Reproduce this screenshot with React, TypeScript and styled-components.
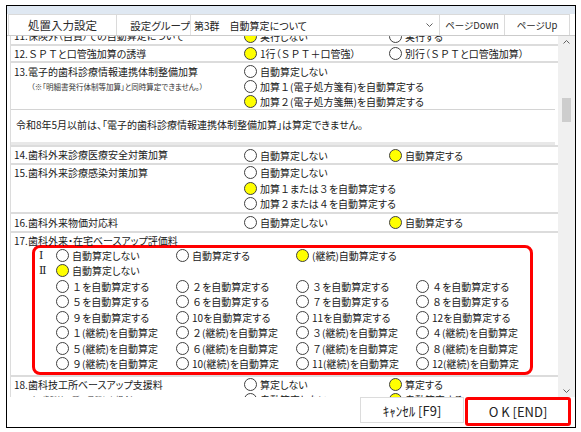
import React from 'react';
import styled, { createGlobalStyle, css } from 'styled-components';

type Opt = { text: string; on?: boolean };

type Entry = {
  title: string;
  sub?: string;
  opts: Opt[];
  stack?: boolean;
  line: number;
  padTop?: number;
  info?: string;
};

const GlobalStyle = createGlobalStyle`
  html, body {
    margin: 0;
    padding: 0;
    background: #ffffff;
  }
  body {
    font-family: "Noto Sans CJK JP", "Noto Sans", sans-serif;
    font-size: 10px;
    color: #202020;
    font-feature-settings: "palt";
  }
`;

const Window = styled.div`
  margin: 5px 0 0 6px;
  width: 568px;
  height: 421px;
  border: 1px solid #000;
  background: #fff;
  display: flex;
  flex-direction: column;
  overflow: hidden;
`;

const Caption = styled.div`
  height: 8px;
  background: #dfe8f2;
`;

const Toolbar = styled.div`
  display: flex;
  height: 21px;
  padding-left: 1px;
  border-bottom: 1px solid #cbcbcb;
`;

const ToolButton = styled.div<{ $w: number; $size?: number }>`
  width: ${p => p.$w}px;
  box-sizing: border-box;
  border: 1px solid #dadada;
  border-bottom: none;
  border-left: none;
  display: flex;
  align-items: center;
  justify-content: center;
  font-size: ${p => p.$size ?? 9.5}px;
  color: #2a2a2a;
  white-space: nowrap;
  &:first-child {
    border-left: 1px solid #dadada;
  }
`;

const Group = styled.div`
  width: 322px;
  display: flex;
  border-top: 1px solid #dadada;
  border-right: 1px solid #dadada;
`;

const GroupLabel = styled.div`
  width: 73px;
  display: flex;
  align-items: center;
  justify-content: flex-end;
  font-size: 10.5px;
  color: #2a2a2a;
  white-space: nowrap;
`;

const Select = styled.div`
  flex: 1;
  display: flex;
  align-items: center;
  justify-content: space-between;
  padding: 0 6px 0 3px;
  border-left: 1px solid #e2e2e2;
  font-size: 10px;
`;

const Body = styled.div`
  flex: 1;
  display: flex;
  min-height: 0;
`;

const Viewport = styled.div`
  flex: 1;
  overflow: hidden;
  padding-left: 3px;
`;

/* list is scrolled a little, so item 11 is cut at the top */
const List = styled.div`
  margin-top: -8px;
`;

const Row = styled.div<{ $padTop?: number }>`
  background: #fff;
  border-left: 1px solid #dcdcdc;
  border-bottom: 2px solid #dcdcdc;
  padding-top: ${p => p.$padTop ?? 0}px;
`;

const RowMain = styled.div`
  display: grid;
  grid-template-columns: 233px 1fr;
`;

const Label = styled.div<{ $line: number }>`
  padding-left: 3px;
  line-height: ${p => p.$line}px;
  white-space: nowrap;
  & > span {
    display: block;
  }
`;

const Sub = styled.span`
  padding-left: 17px;
  font-size: 7.5px;
  color: #333;
`;

const Options = styled.div<{ $stack?: boolean; $line: number }>`
  display: grid;
  grid-template-columns: ${p => (p.$stack ? '1fr' : '145px 1fr')};
  grid-auto-rows: ${p => p.$line}px;
`;

const Choice = styled.div`
  display: flex;
  align-items: center;
  gap: 3px;
  white-space: nowrap;
`;

const Dot = styled.span<{ $on?: boolean }>`
  flex: none;
  width: 13px;
  height: 13px;
  box-sizing: border-box;
  border-radius: 50%;
  border: 1px solid #404040;
  background: ${p => (p.$on ? '#ffff00' : '#fff')};
`;

/* full-width latin and digits keep their em width */
const Wide = styled.span`
  font-feature-settings: normal;
`;

const Info = styled.div`
  margin-right: 3px;
  border-top: 1px solid #d4d4d4;
  border-bottom: 3px solid #e8e8e8;
  padding: 7px 0 9px 5px;
  line-height: 16px;
`;

const Title = styled.div`
  padding: 2px 0 0 3px;
  line-height: 12px;
`;

const Marked = styled.div`
  margin: -2px 0 0 21px;
  width: 501px;
  box-sizing: border-box;
  border: 3px solid #ff0000;
  border-radius: 8px;
`;

const BoxLine = styled.div`
  display: grid;
  grid-template-columns: 21px repeat(3, 120px) 1fr;
  height: 15.5px;
`;

const Roman = styled.div`
  display: flex;
  align-items: center;
  padding-left: 4px;
  font-family: "DejaVu Serif", serif;
  font-size: 11px;
  color: #222;
`;

const ScrollBar = styled.div`
  width: 17px;
  background: #f0f0f0;
  display: flex;
  flex-direction: column;
`;

const Arrow = styled.div`
  height: 12px;
  display: flex;
  align-items: center;
  justify-content: center;
`;

const Track = styled.div`
  flex: 1;
`;

const Thumb = styled.div<{ $top: number; $h: number }>`
  margin: ${p => p.$top}px auto 0;
  width: 9px;
  height: ${p => p.$h}px;
  background: #cdcdcd;
`;

const Footer = styled.div`
  height: 30px;
  display: flex;
  justify-content: flex-end;
  align-items: flex-start;
  gap: 1px;
  padding-right: 4px;
`;

const FooterButton = styled.div<{ $mark?: boolean }>`
  width: 104px;
  height: 26px;
  box-sizing: border-box;
  border: 1px solid #dcdcdc;
  display: flex;
  align-items: center;
  justify-content: center;
  font-size: 13px;
  color: #222;
  font-feature-settings: normal;
  ${p =>
    p.$mark &&
    css`
      width: 106px;
      height: 29px;
      border: 3px solid #ff0000;
      border-radius: 3px;
    `}
`;

const Chevron = ({ up }: { up?: boolean }) => (
  <svg width="7" height="4" viewBox="0 0 7 4">
    <path
      d={up ? 'M0.5 3.5 L3.5 0.5 L6.5 3.5' : 'M0.5 0.5 L3.5 3.5 L6.5 0.5'}
      fill="none"
      stroke="#606060"
      strokeWidth="1"
    />
  </svg>
);

const wideRun = /([Ａ-Ｚ０-９＋　]+)/;

const Txt = ({ text }: { text: string }) => (
  <>{text.split(wideRun).map((part, i) => (i % 2 ? <Wide key={i}>{part}</Wide> : part))}</>
);

const items: Entry[] = [
  {
    title: '11.保険外（自費）での自動算定について',
    opts: [{ text: '実行しない', on: true }, { text: '実行する' }],
    line: 16,
  },
  {
    title: '12.ＳＰＴと口管強加算の誘導',
    opts: [{ text: '1行（ＳＰＴ＋口管強）', on: true }, { text: '別行（ＳＰＴと口管強加算）' }],
    line: 15,
  },
  {
    title: '13.電子的歯科診療情報連携体制整備加算',
    sub: '（※「明細書発行体制等加算」と同時算定できません。）',
    opts: [
      { text: '自動算定しない' },
      { text: '加算１(電子処方箋有)を自動算定する' },
      { text: '加算２(電子処方箋無)を自動算定する', on: true },
    ],
    stack: true,
    line: 15,
    padTop: 1,
    info: '令和8年5月以前は、「電子的歯科診療情報連携体制整備加算」は算定できません。',
  },
  {
    title: '14.歯科外来診療医療安全対策加算',
    opts: [{ text: '自動算定しない' }, { text: '自動算定する', on: true }],
    line: 16,
  },
  {
    title: '15.歯科外来診療感染対策加算',
    opts: [
      { text: '自動算定しない' },
      { text: '加算１または３を自動算定する', on: true },
      { text: '加算２または４を自動算定する' },
    ],
    stack: true,
    line: 15.5,
  },
  {
    title: '16.歯科外来物価対応料',
    opts: [{ text: '自動算定しない' }, { text: '自動算定する', on: true }],
    line: 16,
    padTop: 1,
  },
];

const lastItem: Entry = {
  title: '18.歯科技工所ベースアップ支援料',
  sub: '（※歯科技工所へ委託した場合）',
  opts: [
    { text: '算定しない' },
    { text: '算定する', on: true },
    { text: '自動算定しない' },
    { text: '自動算定する', on: true },
  ],
  line: 15,
};

type Cell = Opt | null;

const series = (suffix: string) =>
  ['１', '２', '３', '４', '５', '６', '７', '８', '９', '10', '11', '12'].map(n => ({ text: n + suffix }));

const plain = series('を自動算定する');
const cont = series('(継続)を自動算定');

const baseUp: { roman: string; cells: Cell[] }[] = [
  {
    roman: 'Ⅰ',
    cells: [{ text: '自動算定しない' }, { text: '自動算定する' }, { text: '(継続)自動算定する', on: true }],
  },
  { roman: 'Ⅱ', cells: [{ text: '自動算定しない', on: true }] },
  { roman: '', cells: plain.slice(0, 4) },
  { roman: '', cells: plain.slice(4, 8) },
  { roman: '', cells: plain.slice(8, 12) },
  { roman: '', cells: cont.slice(0, 4) },
  { roman: '', cells: cont.slice(4, 8) },
  { roman: '', cells: cont.slice(8, 12) },
];

const Radio = ({ opt }: { opt: Opt }) => (
  <Choice>
    <Dot $on={opt.on} />
    <span>
      <Txt text={opt.text} />
    </span>
  </Choice>
);

const SettingRow = ({ item }: { item: Entry }) => (
  <Row $padTop={item.padTop}>
    <RowMain>
      <Label $line={item.line}>
        <span>
          <Txt text={item.title} />
        </span>
        {item.sub && <Sub>{item.sub}</Sub>}
      </Label>
      <Options $stack={item.stack} $line={item.line}>
        {item.opts.map(o => (
          <Radio key={o.text + (o.on ? '1' : '0')} opt={o} />
        ))}
      </Options>
    </RowMain>
    {item.info && <Info>{item.info}</Info>}
  </Row>
);

const BaseUpRow = () => (
  <Row>
    <Title>17.歯科外来・在宅ベースアップ評価料</Title>
    <Marked>
      {baseUp.map((line, i) => (
        <BoxLine key={i}>
          <Roman>{line.roman}</Roman>
          {line.cells.map((c, j) => (c ? <Radio key={j} opt={c} /> : <span key={j} />))}
        </BoxLine>
      ))}
    </Marked>
  </Row>
);

export default function App() {
  return (
    <>
      <GlobalStyle />
      <Window>
        <Caption />
        <Toolbar>
          <ToolButton $w={109} $size={11.5}>
            処置入力設定
          </ToolButton>
          <Group>
            <GroupLabel>設定グループ</GroupLabel>
            <Select>
              <span>
                <Txt text="第3群　自動算定について" />
              </span>
              <Chevron />
            </Select>
          </Group>
          <ToolButton $w={65}>ページDown</ToolButton>
          <ToolButton $w={65}>ページUp</ToolButton>
        </Toolbar>
        <Body>
          <Viewport>
            <List>
              {items.map(item => (
                <SettingRow key={item.title} item={item} />
              ))}
              <BaseUpRow />
              <SettingRow item={lastItem} />
            </List>
          </Viewport>
          <ScrollBar>
            <Arrow>
              <Chevron up />
            </Arrow>
            <Track>
              <Thumb $top={50} $h={24} />
            </Track>
            <Arrow>
              <Chevron />
            </Arrow>
          </ScrollBar>
        </Body>
        <Footer>
          <FooterButton>ｷｬﾝｾﾙ [F9]</FooterButton>
          <FooterButton $mark>O K [END]</FooterButton>
        </Footer>
      </Window>
    </>
  );
}
